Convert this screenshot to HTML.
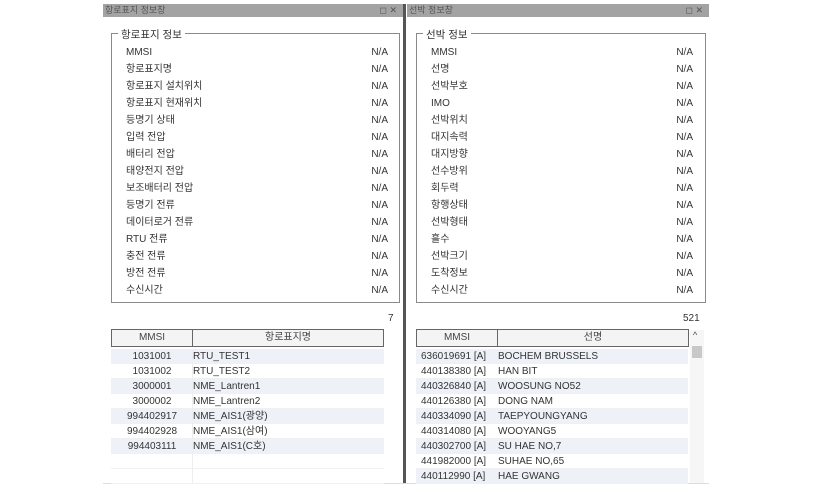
<!DOCTYPE html>
<html><head><meta charset="utf-8"><style>
body{margin:0;width:830px;height:492px;background:#fff;position:relative;overflow:hidden;font-family:"Liberation Sans","Noto Sans CJK KR",sans-serif;color:#333;font-size:10px}
.a{position:absolute}
.tb{background:#a3a3a3;height:13px;top:4px;color:#555;font-size:9px;line-height:13px}
.gb{border:1px solid #8a8a8a;top:33px;height:268px}
.lg{background:#fff;padding:0 3px;top:-7px;left:6px;font-size:10.5px;color:#333}
.row{height:17px;line-height:17px;font-size:10px}
.th{border:1.5px solid #666;background:#f4f4f4;height:16px;top:329px;line-height:16px;font-size:10px;text-align:center;color:#444}
.tr{height:15px;line-height:15px;font-size:10px;box-sizing:border-box;border-bottom:1px solid #f0f0f0}
</style></head><body>
<div class="a tb" style="left:103px;width:300px"><span style="padding-left:2px">항로표지 정보창</span><span class="a" style="right:6px;top:0">◻ ✕</span></div>
<div class="a tb" style="left:407px;width:302px"><span style="padding-left:2px">선박 정보창</span><span class="a" style="right:6px;top:0">◻ ✕</span></div>
<div class="a" style="left:403px;top:4px;width:3px;height:480px;background:#555"></div>
<div class="a" style="left:103px;top:483px;width:606px;height:1px;background:#ddd"></div>

<div class="a gb" style="left:111px;width:287px"><div class="a lg">항로표지 정보</div>
<div class="a" style="left:14px;top:10px;width:262px">
<div class="row">MMSI<span style="float:right">N/A</span></div>
<div class="row">항로표지명<span style="float:right">N/A</span></div>
<div class="row">항로표지 설치위치<span style="float:right">N/A</span></div>
<div class="row">항로표지 현재위치<span style="float:right">N/A</span></div>
<div class="row">등명기 상태<span style="float:right">N/A</span></div>
<div class="row">입력 전압<span style="float:right">N/A</span></div>
<div class="row">배터리 전압<span style="float:right">N/A</span></div>
<div class="row">태양전지 전압<span style="float:right">N/A</span></div>
<div class="row">보조배터리 전압<span style="float:right">N/A</span></div>
<div class="row">등명기 전류<span style="float:right">N/A</span></div>
<div class="row">데이터로거 전류<span style="float:right">N/A</span></div>
<div class="row">RTU 전류<span style="float:right">N/A</span></div>
<div class="row">충전 전류<span style="float:right">N/A</span></div>
<div class="row">방전 전류<span style="float:right">N/A</span></div>
<div class="row">수신시간<span style="float:right">N/A</span></div>
</div></div>

<div class="a gb" style="left:416px;width:288px"><div class="a lg">선박 정보</div>
<div class="a" style="left:14px;top:10px;width:262px">
<div class="row">MMSI<span style="float:right">N/A</span></div>
<div class="row">선명<span style="float:right">N/A</span></div>
<div class="row">선박부호<span style="float:right">N/A</span></div>
<div class="row">IMO<span style="float:right">N/A</span></div>
<div class="row">선박위치<span style="float:right">N/A</span></div>
<div class="row">대지속력<span style="float:right">N/A</span></div>
<div class="row">대지방향<span style="float:right">N/A</span></div>
<div class="row">선수방위<span style="float:right">N/A</span></div>
<div class="row">회두력<span style="float:right">N/A</span></div>
<div class="row">항행상태<span style="float:right">N/A</span></div>
<div class="row">선박형태<span style="float:right">N/A</span></div>
<div class="row">흘수<span style="float:right">N/A</span></div>
<div class="row">선박크기<span style="float:right">N/A</span></div>
<div class="row">도착정보<span style="float:right">N/A</span></div>
<div class="row">수신시간<span style="float:right">N/A</span></div>
</div></div>

<div class="a" style="left:388px;top:313px">7</div>
<div class="a" style="left:683px;top:313px">521</div>

<div class="a th" style="left:111px;width:80px">MMSI</div>
<div class="a th" style="left:192px;width:190px">항로표지명</div>
<div class="a" style="left:111px;top:349px;width:273px">
<div class="tr" style="background:#eef2f8"><span style="display:inline-block;width:82px;text-align:center">1031001</span>RTU_TEST1</div>
<div class="tr"><span style="display:inline-block;width:82px;text-align:center">1031002</span>RTU_TEST2</div>
<div class="tr" style="background:#eef2f8"><span style="display:inline-block;width:82px;text-align:center">3000001</span>NME_Lantren1</div>
<div class="tr"><span style="display:inline-block;width:82px;text-align:center">3000002</span>NME_Lantren2</div>
<div class="tr" style="background:#eef2f8"><span style="display:inline-block;width:82px;text-align:center">994402917</span>NME_AIS1(광양)</div>
<div class="tr"><span style="display:inline-block;width:82px;text-align:center">994402928</span>NME_AIS1(삼여)</div>
<div class="tr" style="background:#eef2f8"><span style="display:inline-block;width:82px;text-align:center">994403111</span>NME_AIS1(C호)</div>
<div class="tr"></div><div class="tr"></div>
</div>
<div class="a" style="left:192px;top:349px;width:1px;height:134px;background:#eee"></div>

<div class="a th" style="left:416px;width:80px">MMSI</div>
<div class="a th" style="left:497px;width:190px">선명</div>
<div class="a" style="left:416px;top:349px;width:272px">
<div class="tr" style="background:#eef2f8"><span style="display:inline-block;width:82px;padding-left:5px;box-sizing:border-box">636019691 [A]</span>BOCHEM BRUSSELS</div>
<div class="tr"><span style="display:inline-block;width:82px;padding-left:5px;box-sizing:border-box">440138380 [A]</span>HAN BIT</div>
<div class="tr" style="background:#eef2f8"><span style="display:inline-block;width:82px;padding-left:5px;box-sizing:border-box">440326840 [A]</span>WOOSUNG NO52</div>
<div class="tr"><span style="display:inline-block;width:82px;padding-left:5px;box-sizing:border-box">440126380 [A]</span>DONG NAM</div>
<div class="tr" style="background:#eef2f8"><span style="display:inline-block;width:82px;padding-left:5px;box-sizing:border-box">440334090 [A]</span>TAEPYOUNGYANG</div>
<div class="tr"><span style="display:inline-block;width:82px;padding-left:5px;box-sizing:border-box">440314080 [A]</span>WOOYANG5</div>
<div class="tr" style="background:#eef2f8"><span style="display:inline-block;width:82px;padding-left:5px;box-sizing:border-box">440302700 [A]</span>SU HAE NO,7</div>
<div class="tr"><span style="display:inline-block;width:82px;padding-left:5px;box-sizing:border-box">441982000 [A]</span>SUHAE NO,65</div>
<div class="tr" style="background:#eef2f8"><span style="display:inline-block;width:82px;padding-left:5px;box-sizing:border-box">440112990 [A]</span>HAE GWANG</div>
</div>
<div class="a" style="left:690px;top:330px;width:14px;height:153px;background:#f6f6f6"></div>
<div class="a" style="left:693px;top:330px;font-size:9px;color:#444">^</div>
<div class="a" style="left:692px;top:346px;width:10px;height:12px;background:#c8c8c8"></div>
</body></html>
